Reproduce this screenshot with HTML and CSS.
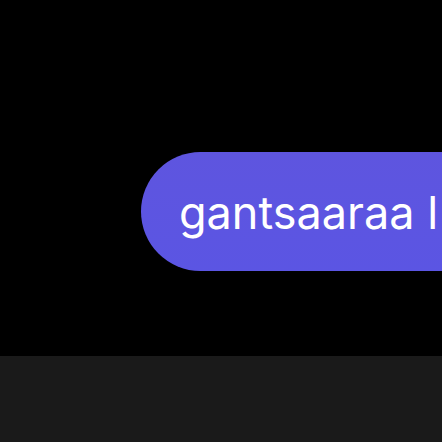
FILE: index.html
```html
<!DOCTYPE html>
<html>
<head>
<meta charset="utf-8">
<link rel="stylesheet" href="styles.css">
</head>
<body>
<div class="app">
  <main class="chat">
    <div class="bubble">gantsaaraa l</div>
  </main>
  <footer class="bar"></footer>
</div>
</body>
</html>
```
FILE: styles.css
```css
html, body {
  margin: 0;
  padding: 0;
  background: #000;
  overflow: hidden;
}
.app {
  width: 442px;
  height: 442px;
  display: flex;
  flex-direction: column;
}
.chat {
  height: 356px;
  flex: none;
  padding-top: 152px;
  padding-left: 141px;
  box-sizing: border-box;
  overflow: hidden;
}
.bubble {
  height: 119px;
  width: 400px;
  box-sizing: border-box;
  border-radius: 60px 0 0 60px;
  background: linear-gradient(#5e55df, #5b55e3);
  color: #fff;
  font-family: Inter, sans-serif;
  font-size: 45px;
  display: flex;
  align-items: center;
  padding-left: 38px;
  padding-top: 2px;
  white-space: nowrap;
}
.bar {
  flex: 1;
  background: #1a1a1a;
}
```
